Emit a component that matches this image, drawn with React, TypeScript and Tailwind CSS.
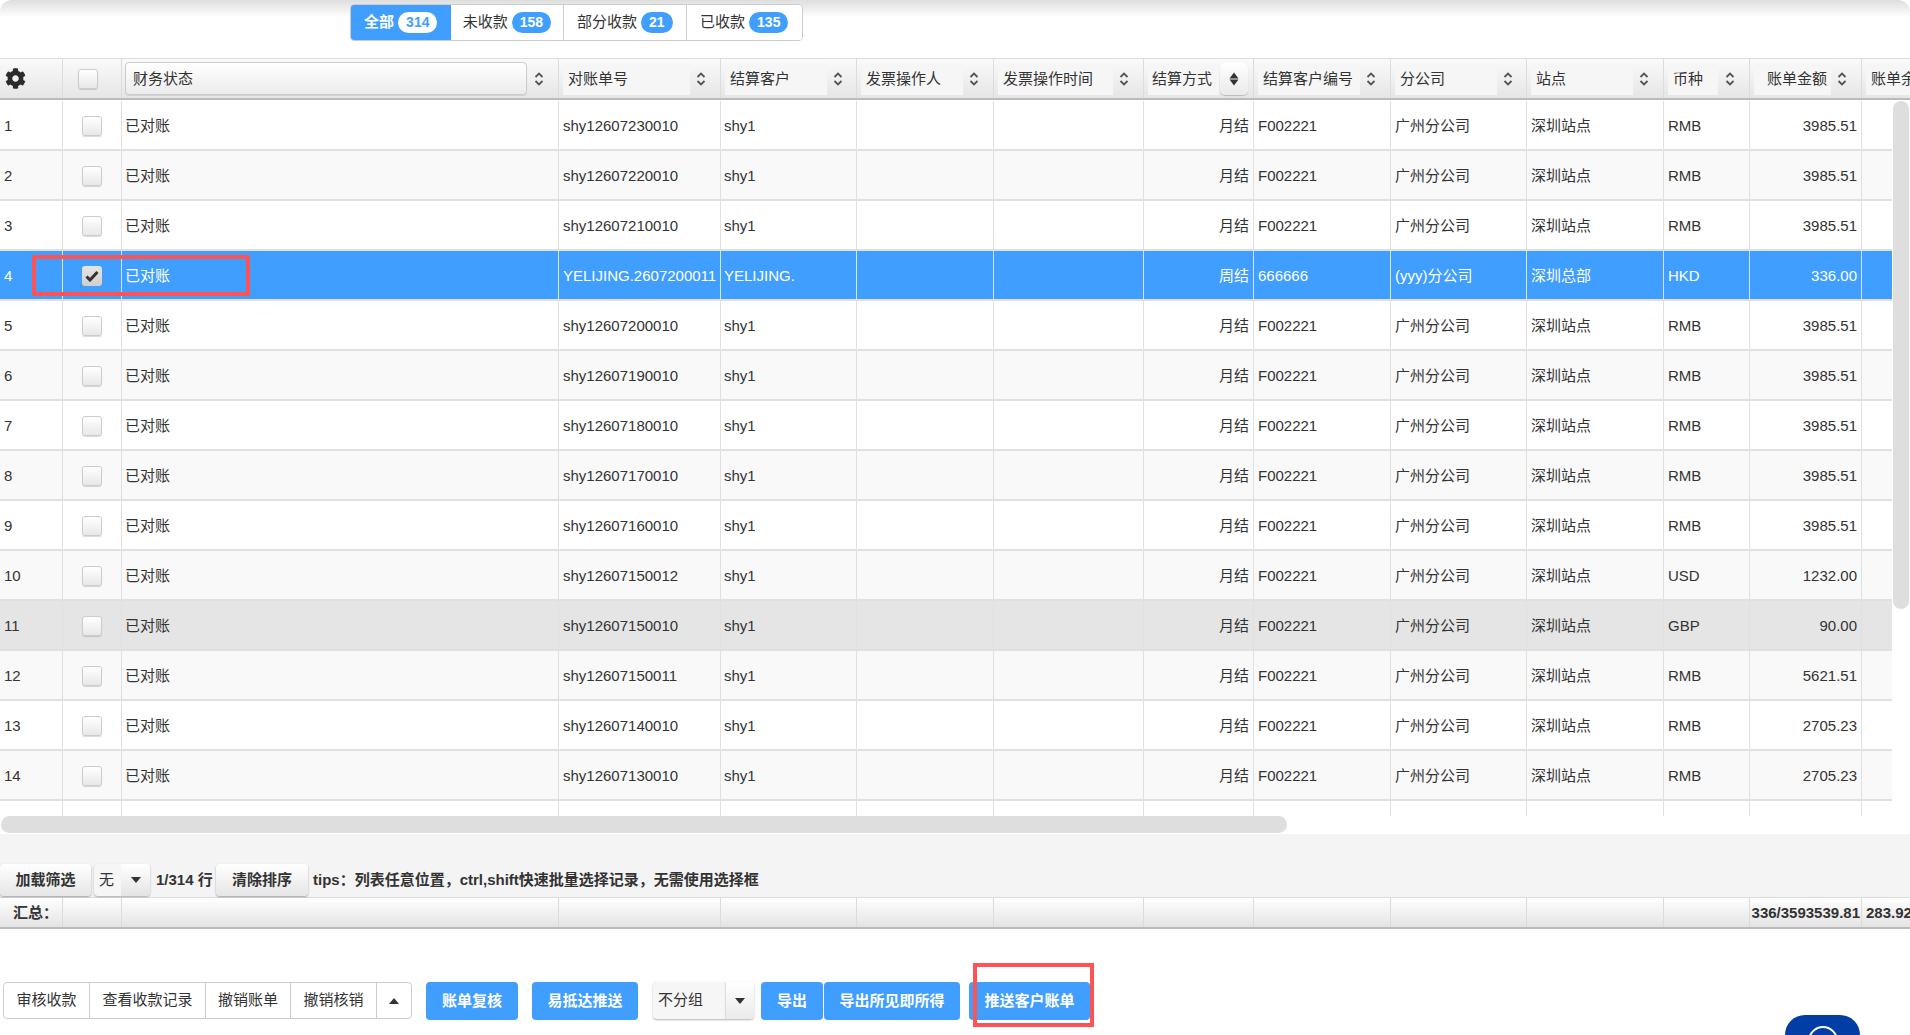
import React from "react";
import { FaCog } from "react-icons/fa";

const widths = [63, 59, 437, 162, 136, 137, 150, 110, 137, 136, 137, 86, 112, 60];

const headers = [
  { label: "对账单号", box: 127 },
  { label: "结算客户", box: 102 },
  { label: "发票操作人", box: 102 },
  { label: "发票操作时间", box: 115 },
];
const headers2 = [
  { label: "结算客户编号", box: 102 },
  { label: "分公司", box: 102 },
  { label: "站点", box: 102 },
  { label: "币种", box: 50 },
  { label: "账单金额", box: 77, pad: 13 },
];

const normal = (no: string, customer = "shy1") => ({
  no,
  customer,
  way: "月结",
  code: "F002221",
  branch: "广州分公司",
  site: "深圳站点",
  cur: "RMB",
  amount: "3985.51",
});

const rows = [
  normal("shy12607230010"),
  normal("shy12607220010"),
  normal("shy12607210010"),
  {
    no: "YELIJING.2607200011",
    customer: "YELIJING.",
    way: "周结",
    code: "666666",
    branch: "(yyy)分公司",
    site: "深圳总部",
    cur: "HKD",
    amount: "336.00",
  },
  normal("shy12607200010"),
  normal("shy12607190010"),
  normal("shy12607180010"),
  normal("shy12607170010"),
  normal("shy12607160010"),
  { ...normal("shy12607150012"), cur: "USD", amount: "1232.00" },
  { ...normal("shy12607150010"), cur: "GBP", amount: "90.00" },
  { ...normal("shy12607150011"), amount: "5621.51" },
  { ...normal("shy12607140010"), amount: "2705.23" },
  { ...normal("shy12607130010"), amount: "2705.23" },
];

const SortIcon = () => (
  <svg width="10" height="14" viewBox="0 0 10 14" fill="none" stroke="#555" strokeWidth="1.8">
    <path d="M1.5 5 L5 1.5 L8.5 5" />
    <path d="M1.5 9 L5 12.5 L8.5 9" />
  </svg>
);

const Caret = ({ up = false }: { up?: boolean }) => (
  <svg width="10" height="6" viewBox="0 0 10 6" fill="#333">
    <path d={up ? "M0 6 L5 0 L10 6 Z" : "M0 0 L5 6 L10 0 Z"} />
  </svg>
);

const Checkbox = ({ checked = false }: { checked?: boolean }) => (
  <div
    className={
      checked
        ? "flex h-5 w-5 items-center justify-center rounded-[3px] bg-gradient-to-b from-[#e6e6e6] to-[#cfcfcf]"
        : "h-5 w-5 rounded-[3px] border border-[#ccc] bg-gradient-to-b from-white to-[#e8e8e8] shadow-[0_1px_1px_rgba(0,0,0,0.15)]"
    }
  >
    {checked && (
      <svg width="14" height="12" viewBox="0 0 14 12" fill="none" stroke="#333" strokeWidth="3">
        <path d="M1.5 6.5 L5 10 L12.5 2" />
      </svg>
    )}
  </div>
);

const HeadCell = ({ w, children, className = "" }: { w: number; children?: React.ReactNode; className?: string }) => (
  <div
    style={{ width: w }}
    className={`flex h-full shrink-0 items-center border-r border-[#dcdcdc] ${className}`}
  >
    {children}
  </div>
);

const SortHead = ({ w, label, box, pad = 5 }: { w: number; label: string; box: number; pad?: number }) => (
  <HeadCell w={w} className="pl-1 pr-2">
    <div style={{ width: box, paddingLeft: pad }} className="flex h-8 shrink-0 items-center whitespace-nowrap bg-[#f6f6f6] pt-px">
      {label}
    </div>
    <div className="flex flex-1 justify-center">
      <SortIcon />
    </div>
  </HeadCell>
);

const Cell = ({
  i,
  right = false,
  sel,
  children,
}: {
  i: number;
  right?: boolean;
  sel: boolean;
  children?: React.ReactNode;
}) => (
  <div
    style={{ width: widths[i] }}
    className={`flex h-full shrink-0 items-center overflow-hidden whitespace-nowrap border-r pt-[2px] ${
      i === 2 || i === 4 ? "pl-[3px] pr-1" : "px-1"
    } ${right ? "justify-end" : ""} ${sel ? "border-[#d5e6f8]" : "border-[#e0e0e0]"}`}
  >
    {children}
  </div>
);

const rowBg = (idx: number) => {
  if (idx === 3) return "bg-[#409eff] text-white";
  if (idx === 10) return "bg-[#e5e5e5]";
  return idx % 2 === 1 ? "bg-[#f9f9f9]" : "bg-white";
};

const Tab = ({ label, count, active = false, w }: { label: string; count: string; active?: boolean; w: number }) => (
  <div
    style={{ width: w }}
    className={`flex h-full items-center justify-center gap-1 ${
      active ? "bg-[#409eff] font-bold text-white" : "border-r border-[#ccc] bg-white last:border-r-0"
    }`}
  >
    <span>{label}</span>
    <span
      className={`flex h-[21px] items-center rounded-full px-2 text-[14px] font-bold ${
        active ? "bg-white text-[#409eff]" : "bg-[#409eff] text-white"
      }`}
    >
      {count}
    </span>
  </div>
);

const GrayBtn = ({ w, children }: { w: number; children: React.ReactNode }) => (
  <div
    style={{ width: w }}
    className="flex h-8 shrink-0 items-center justify-center rounded-[4px] bg-gradient-to-b from-white to-[#e6e6e6] pt-px font-bold text-[#333] shadow-[0_1px_2px_rgba(0,0,0,0.35)]"
  >
    {children}
  </div>
);

const BlueBtn = ({ w, children, className = "" }: { w: number; children: React.ReactNode; className?: string }) => (
  <div
    style={{ width: w }}
    className={`flex h-[38px] shrink-0 items-center justify-center rounded-[4px] bg-[#409eff] font-bold text-white ${className}`}
  >
    {children}
  </div>
);

export default function App() {
  return (
    <div className="relative flex h-[1035px] w-[1910px] flex-col overflow-hidden rounded-[12px] bg-white font-['Liberation_Sans','Noto_Sans_CJK_SC',sans-serif] text-[15px] text-[#333]">
      {/* top shadow + tabs */}
      <div className="h-[58px] shrink-0 bg-gradient-to-b from-[#dedede] via-white via-[30%] to-white pl-[350px] pt-1">
        <div className="flex h-[37px] w-[453px] overflow-hidden rounded-[4px] border border-[#ccc]">
          <Tab label="全部" count="314" active w={100} />
          <Tab label="未收款" count="158" w={114} />
          <Tab label="部分收款" count="21" w={123} />
          <Tab label="已收款" count="135" w={116} />
        </div>
      </div>

      {/* header */}
      <div className="flex h-[42px] shrink-0 overflow-hidden border-b-2 border-t border-b-[#bbb] border-t-[#ddd] bg-gradient-to-b from-[#fafafa] to-[#e6e6e6]">
        <HeadCell w={widths[0]} className="pl-[5px]">
          <FaCog size={21} color="#2b2b2b" />
        </HeadCell>
        <HeadCell w={widths[1]} className="justify-center pr-2">
          <Checkbox />
        </HeadCell>
        <HeadCell w={widths[2]} className="pl-[3px] pr-2">
          <div className="flex h-[33px] w-[402px] shrink-0 items-center rounded-[4px] border border-[#ccc] bg-gradient-to-b from-white to-[#ececec] pl-[7px] pt-px shadow-[0_1px_1px_rgba(0,0,0,0.1)]">
            财务状态
          </div>
          <div className="flex flex-1 justify-center">
            <SortIcon />
          </div>
        </HeadCell>
        {headers.map((h, i) => (
          <SortHead key={h.label} w={widths[i + 3]} label={h.label} box={h.box} />
        ))}
        <HeadCell w={widths[7]} className="pl-1">
          <div className="flex h-8 w-[71px] items-center whitespace-nowrap bg-[#f6f6f6] pl-1 pt-px">结算方式</div>
          <div className="ml-px flex h-8 w-[28px] items-center justify-center rounded-[5px] bg-gradient-to-b from-white to-[#eaeaea] shadow-[0_1px_1px_rgba(0,0,0,0.2)]">
            <svg width="10" height="14" viewBox="0 0 10 14" fill="#333">
              <path d="M5 0.5 L9.5 6.5 H0.5 Z" />
              <path d="M5 13.5 L9.5 7.5 H0.5 Z" />
            </svg>
          </div>
        </HeadCell>
        {headers2.map((h, i) => (
          <SortHead key={h.label} w={widths[i + 8]} label={h.label} box={h.box} pad={h.pad} />
        ))}
        <HeadCell w={widths[13]} className="border-r-0 pl-1">
          <div className="flex h-8 flex-1 items-center whitespace-nowrap bg-[#f6f6f6] pl-[5px] pt-px">账单余额</div>
        </HeadCell>
      </div>

      {/* body */}
      <div className="h-[716px] w-[1892px] shrink-0 overflow-hidden pt-px">
        {rows.map((r, idx) => {
          const sel = idx === 3;
          return (
            <div key={idx} className={`flex h-[50px] border-b-2 border-[#e0e0e0] ${rowBg(idx)}`}>
              <Cell i={0} sel={sel}>{idx + 1}</Cell>
              <Cell i={1} sel={sel}>
                <div className="ml-[15px]">
                  <Checkbox checked={sel} />
                </div>
              </Cell>
              <Cell i={2} sel={sel}>已对账</Cell>
              <Cell i={3} sel={sel}>{r.no}</Cell>
              <Cell i={4} sel={sel}>{r.customer}</Cell>
              <Cell i={5} sel={sel} />
              <Cell i={6} sel={sel} />
              <Cell i={7} sel={sel} right>{r.way}</Cell>
              <Cell i={8} sel={sel}>{r.code}</Cell>
              <Cell i={9} sel={sel}>{r.branch}</Cell>
              <Cell i={10} sel={sel}>{r.site}</Cell>
              <Cell i={11} sel={sel}>{r.cur}</Cell>
              <Cell i={12} sel={sel} right>{r.amount}</Cell>
            </div>
          );
        })}
        <div className="flex h-[50px]">
          {widths.slice(0, 13).map((w, i) => (
            <div key={i} style={{ width: w }} className="h-full shrink-0 border-r border-[#e0e0e0]" />
          ))}
        </div>
      </div>

      {/* horizontal scrollbar */}
      <div className="h-[18px] shrink-0 bg-white pl-px">
        <div className="h-[17px] w-[1286px] rounded-full bg-[#dedede]" />
      </div>

      {/* toolbar */}
      <div className="flex h-[64px] shrink-0 items-end border-b border-[#ddd] bg-[#f4f4f4] pb-px">
        <GrayBtn w={91}>加载筛选</GrayBtn>
        <div className="ml-[3px] flex h-8 w-[56px] shrink-0 overflow-hidden rounded-[4px] bg-[#f6f6f6] shadow-[0_1px_2px_rgba(0,0,0,0.3)]">
          <div className="flex w-[27px] items-center pl-[5px] pt-px">无</div>
          <div className="flex flex-1 items-center justify-center bg-gradient-to-b from-white to-[#e4e4e4]">
            <Caret />
          </div>
        </div>
        <div className="ml-[6px] flex h-8 w-[60px] shrink-0 items-center whitespace-nowrap pt-px font-bold">1/314 行</div>
        <GrayBtn w={92}>清除排序</GrayBtn>
        <div className="ml-[5px] flex h-8 items-center whitespace-nowrap pt-px font-bold">
          tips：列表任意位置，ctrl,shift快速批量选择记录，无需使用选择框
        </div>
      </div>

      {/* summary */}
      <div className="flex h-[31px] shrink-0 overflow-hidden whitespace-nowrap border-b-2 border-[#bbb] bg-gradient-to-b from-white to-[#e4e4e4] font-bold">
        {widths.map((w, i) => (
          <div
            key={i}
            style={{ width: w }}
            className={`flex h-full shrink-0 items-center pt-px ${i === 13 ? "" : "border-r border-[#dcdcdc]"} ${
              i === 0 ? "pl-[13px]" : i === 12 ? "justify-end pr-px" : "pl-1"
            }`}
          >
            {i === 0 && "汇总："}
            {i === 12 && "336/3593539.81"}
            {i === 13 && "283.92"}
          </div>
        ))}
      </div>

      {/* bottom actions */}
      <div className="flex flex-1 items-start pl-[3px] pt-[53px]">
        <div className="flex h-[37px] w-[409px] shrink-0 overflow-hidden rounded-[4px] border border-[#ccc] bg-white">
          <div className="flex w-[86px] items-center justify-center border-r border-[#ccc]">审核收款</div>
          <div className="flex w-[116px] items-center justify-center border-r border-[#ccc]">查看收款记录</div>
          <div className="flex w-[85px] items-center justify-center border-r border-[#ccc]">撤销账单</div>
          <div className="flex w-[86px] items-center justify-center border-r border-[#ccc]">撤销核销</div>
          <div className="flex flex-1 items-center justify-center">
            <Caret up />
          </div>
        </div>
        <BlueBtn w={92} className="ml-[14px]">账单复核</BlueBtn>
        <BlueBtn w={106} className="ml-[14px]">易抵达推送</BlueBtn>
        <div className="ml-[15px] flex h-[37px] w-[101px] shrink-0 overflow-hidden rounded-[4px] bg-[#f6f6f6] shadow-[0_1px_2px_rgba(0,0,0,0.3)]">
          <div className="flex w-[73px] items-center pl-[5px]">不分组</div>
          <div className="flex flex-1 items-center justify-center bg-gradient-to-b from-white to-[#eaeaea] shadow-[0_0_2px_rgba(0,0,0,0.3)]">
            <Caret />
          </div>
        </div>
        <BlueBtn w={62} className="ml-[7px]">导出</BlueBtn>
        <BlueBtn w={136} className="ml-px">导出所见即所得</BlueBtn>
        <BlueBtn w={121} className="ml-[9px]">推送客户账单</BlueBtn>
      </div>

      {/* vertical scrollbar */}
      <div className="absolute left-[1893px] top-[101px] h-[508px] w-[16px] rounded-full bg-[#dedede]" />

      {/* red annotation boxes */}
      <div className="absolute left-[32px] top-[255px] h-[41px] w-[218px] rounded-[2px] border-4 border-[#ff5252]" />
      <div className="absolute left-[973px] top-[963px] h-[64px] w-[121px] border-4 border-[#ff5252]" />

      {/* floating widget */}
      <div className="absolute left-[1785px] top-[1015px] flex h-[40px] w-[75px] justify-center rounded-t-[20px] bg-[#003da5] pt-[11px]">
        <div className="h-[40px] w-[30px] rounded-full border-2 border-white" />
      </div>
    </div>
  );
}
